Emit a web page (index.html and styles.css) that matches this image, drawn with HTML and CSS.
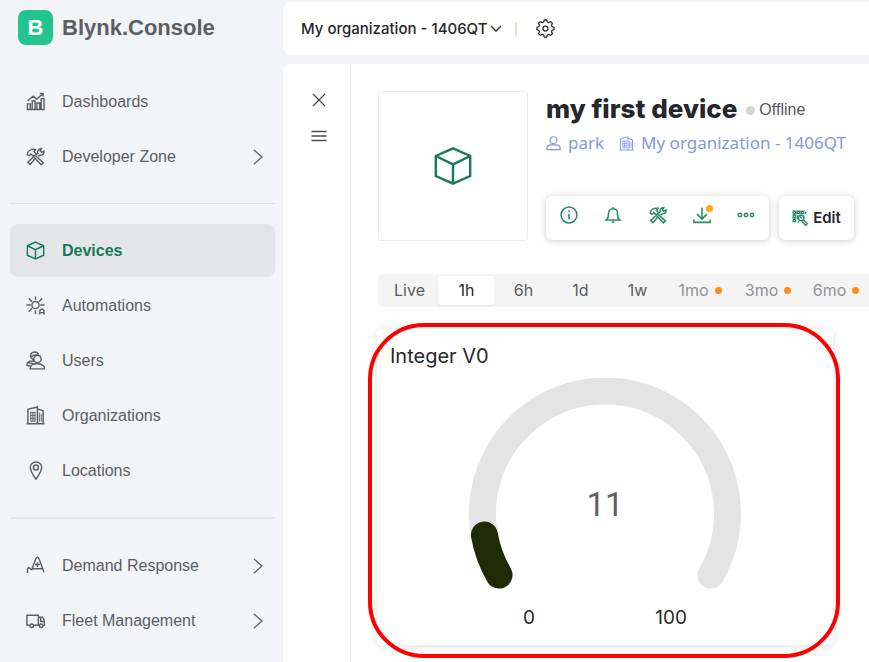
FILE: index.html
```html
<!DOCTYPE html>
<html lang="en">
<head>
<meta charset="utf-8">
<title>Blynk.Console</title>
<meta name="viewport" content="width=device-width, initial-scale=1">
<link rel="stylesheet" href="styles.css">
</head>
<body>
<svg class="defs" aria-hidden="true">
  <symbol id="cube" viewBox="0 0 20 20"><path d="M10 1.2 18.6 5v10L10 18.8 1.4 15V5zM1.4 5 10 9.200 18.600 5M10 9.200V18.800"/></symbol>
  <symbol id="tools" viewBox="0 0 20 20">
    <path d="M1.200 8C2 4 5.500 1.800 10 2.600L8.400 5l2.400 2.400-3 2.600-2.400-2.600-2 1.800z"/>
    <path d="m9.800 9 8.400 7.500-2.200 2.200-8-8.400"/>
    <path d="m10.800 7.800 1.600-1.400c-.5-2.400 1-4.800 4-4.800l-1.500 2.500 1.600 1.500 2.500-1.300c.3 3-2 4.800-4.400 4.300l-1.600 1.500M9.600 12.200l-5.200 6.300-2.600-2.300 5.600-5.400"/>
  </symbol>
  <symbol id="building" viewBox="0 0 20 20">
    <path d="M.5 18.700h19M2 18.500V3.500L12 1v17.500M12 3l6 2v13.500"/>
    <path stroke-width="1" d="M5 6v10M7.200 6v10M9.400 6v10M4.500 7h5.500M4.500 10h5.500M4.500 13h5.500M4.500 16h5.500M14 7v9.500M16 8v8.500"/>
  </symbol>
  <symbol id="chevron" viewBox="0 0 10 16"><path d="m1 1 8 7-8 7"/></symbol>
</svg>
<div class="app">
  <aside class="sidebar">
    <a class="brand" href="#"><span class="logo">B</span><span>Blynk.Console</span></a>
    <nav class="nav">
      <a href="#"><svg class="icon" viewBox="0 0 20 20"><path d="M1.500 18.500v-6h3v6zM6.500 18.500v-9h3v9zM11.500 18.500v-7h3v7zM16 18.500V7h3v11.500zM1 18.500h18M1.500 9.500 7.500 4.500l4 3L18 1.500M14.500 1.500H18V5"/></svg><span>Dashboards</span></a>
      <a href="#"><svg class="icon"><use href="#tools"/></svg><span>Developer Zone</span><svg class="chev"><use href="#chevron"/></svg></a>
      <hr>
      <a href="#" class="active" aria-current="page"><svg class="icon"><use href="#cube"/></svg><span>Devices</span></a>
      <a href="#"><svg class="icon" viewBox="0 0 20 20"><circle cx="10" cy="9.500" r="3.800"/><path d="M10 .5v3.500M10 15v4M.5 9.500H5M15 9.500h4.500M3 2.500l3.500 3.500M17 2.500 13.500 6M3 16.500l3.500-3.500M14.500 19.500v-4l1.500-1.500h1.500l1.500 1.500v4M14.500 17.500H19"/></svg><span>Automations</span></a>
      <a href="#"><svg class="icon" viewBox="0 0 20 20"><circle cx="12" cy="8.300" r="3.900"/><path d="M5 6.500C4 3 6.500 1 9 1s4 1.500 4 3M5 6.500 8 4.500l4-.3M5 6.500l3 3.500M1 15.300c-.5-3.300 2-4.800 6-4.800l2 1M1 15.300l4 .5M2.500 12.500l5 .8M4.500 18.800c-.5-3.700 2.500-5.300 7-5.300s8.500 1.600 8 5.300z"/></svg><span>Users</span></a>
      <a href="#"><svg class="icon"><use href="#building"/></svg><span>Organizations</span></a>
      <a href="#"><svg class="icon" viewBox="0 0 20 20"><path d="M10.500 19C7 14 4.500 10.500 4.500 7a6 6 0 0 1 12 0c0 3.500-2.500 7-6 12z"/><circle cx="10.500" cy="6.800" r="2.600"/></svg><span>Locations</span></a>
      <hr>
      <a href="#"><svg class="icon" viewBox="0 0 20 20"><path d="M1.500 18v-3c0-3 2-3.500 3-1.500l1.500 1 4.500-12C11 1 13 1 13.500 2.500L19 17M7 13.500h10.500M9.500 9h5M12 6.500v5"/></svg><span>Demand Response</span><svg class="chev"><use href="#chevron"/></svg></a>
      <a href="#"><svg class="icon" viewBox="0 0 20 20"><path d="M4 15H1V4.500h12V15H8M13 6.500h4.500l2 4V15h-1M13 15h1M15.500 7v4h4"/><circle cx="6" cy="15.500" r="1.900"/><circle cx="16" cy="15.500" r="1.900"/></svg><span>Fleet Management</span><svg class="chev"><use href="#chevron"/></svg></a>
    </nav>
  </aside>
  <div class="content">
    <header class="topbar">
      <button class="org" type="button">My organization - 1406QT<svg viewBox="0 0 12 8"><path d="m1 1 5 5 5-5"/></svg></button>
      <span class="sep"></span>
      <button class="gear" type="button" aria-label="Settings"><svg viewBox="0 0 20 20"><path d="M8 3.200 8.800 1h2.400l.8 2.200 1.400.6 2.200-1 1.700 1.700-1 2.200.6 1.300 2.100.8v2.400l-2.100.8-.6 1.400 1 2.100-1.700 1.700-2.200-1-1.400.6-.8 2.200H8.800L8 16.800l-1.400-.6-2.200 1-1.700-1.700 1-2.100-.6-1.400L1 11.200V8.800L3.100 8l.6-1.300-1-2.200 1.700-1.700 2.200 1z"/><circle cx="10" cy="10" r="2.600"/></svg></button>
    </header>
    <div class="panel">
      <div class="rail">
        <button type="button" aria-label="Close"><svg viewBox="0 0 16 16"><path d="m2 2 12 12M14 2 2 14"/></svg></button>
        <button type="button" aria-label="Device list"><svg viewBox="0 0 16 16"><path d="M.5 3.500h15M.5 8h15M.5 12.500h15"/></svg></button>
      </div>
      <main>
        <section class="device">
          <div class="thumb"><svg viewBox="0 0 20 20"><use href="#cube"/></svg></div>
          <div class="info">
            <div class="title"><h1>my first device</h1><span class="status">Offline</span></div>
            <div class="meta">
              <a href="#"><svg viewBox="0 0 16 16"><circle cx="8" cy="4.500" r="3.700"/><path d="M1 14.500c-.5-3.500 1.500-5 4.500-5h5c3 0 5 1.500 4.500 5z"/></svg>park</a>
              <a href="#"><svg><use href="#building"/></svg>My organization - 1406QT</a>
            </div>
            <div class="actions">
              <div class="tools">
                <button type="button" aria-label="Info"><svg viewBox="0 0 20 20"><circle cx="10" cy="10" r="8.800"/><path d="M10 8.500V15M10 5v2"/></svg></button>
                <button type="button" aria-label="Notifications"><svg viewBox="0 0 20 20"><path d="M2.500 15.500c2-1.500 2.500-3 2.500-7C5 5 7.200 3 10 3s5 2 5 5.500c0 4 .5 5.500 2.500 7zM10 1v2M8.500 17.800h3"/></svg></button>
                <button type="button" aria-label="Developer tools"><svg><use href="#tools"/></svg></button>
                <button type="button" class="badge" aria-label="Firmware update"><svg viewBox="0 0 20 20"><path d="M10 2v12M4.500 9 10 14.500 15.500 9M1 15v3.200h18V15"/></svg></button>
                <button type="button" aria-label="More"><svg viewBox="0 0 20 20"><circle cx="3.300" cy="10" r="1.900"/><circle cx="10" cy="10" r="1.900"/><circle cx="16.700" cy="10" r="1.900"/></svg></button>
              </div>
              <button type="button" class="edit"><svg viewBox="0 0 20 20"><path d="M1.500 1.500h3v3h-3zM6.500 1.500h3v3h-3zM11.500 1.500h3v3h-3zM1.500 6.500h3v3h-3zM1.500 11.500h3v3h-3zM17 2v3M7 6.500v5M7 15h2"/><circle cx="11.500" cy="10" r="3.500"/><path d="m10 8 2.500 2.500M14.500 12.500l4.800 4.500-2.300 2.300-4.500-5.500"/></svg>Edit</button>
            </div>
          </div>
        </section>
        <div class="ranges">
          <button type="button">Live</button>
          <button type="button" class="on">1h</button>
          <button type="button">6h</button>
          <button type="button">1d</button>
          <button type="button">1w</button>
          <button type="button" class="plan">1mo</button>
          <button type="button" class="plan">3mo</button>
          <button type="button" class="plan">6mo</button>
        </div>
        <section class="card">
          <h2>Integer V0</h2>
          <div class="gauge">
            <svg viewBox="0 0 272 212" role="img" aria-label="Integer V0 gauge">
              <path class="track" d="M30 197A122.500 122.500 0 1 1 242 197"/>
              <path class="value" d="M30 197A122.500 122.500 0 0 1 15.400 157"/>
            </svg>
            <span class="reading">11</span>
          </div>
          <div class="limits"><span>0</span><span>100</span></div>
        </section>
      </main>
    </div>
  </div>
</div>
</body>
</html>
```
FILE: styles.css
```css
* { box-sizing: border-box; }
body {
  margin: 0;
  background: #f2f4f8;
  color: #26272c;
  font-family: "Liberation Sans", Arial, sans-serif;
  font-size: 16px;
  overflow-x: hidden;
}
svg { fill: none; stroke: currentColor; stroke-width: 1.3; flex: none; }
a { color: inherit; text-decoration: none; }
button { font: inherit; color: inherit; background: none; border: 0; padding: 0; cursor: pointer; }
h1, h2 { margin: 0; }
.defs { position: absolute; width: 0; height: 0; }
.app { display: flex; min-height: 100vh; }

.sidebar { width: 283px; flex: none; padding: 10px 8px 0 10px; color: #5c5e63; }
.brand {
  display: flex; align-items: center; gap: 9px;
  margin: 0 0 30px 8px;
  font-size: 22px; font-weight: 700;
}
.logo {
  width: 35px; height: 35px; border-radius: 8px;
  background: #24c48e; color: #fff;
  display: grid; place-items: center;
}
.nav { display: flex; flex-direction: column; gap: 2px; }
.nav a {
  height: 53px; padding: 0 12px 0 16px; border-radius: 8px;
  display: flex; align-items: center; gap: 17px;
}
.nav hr { width: 100%; height: 1px; margin: 18px 0; border: 0; background: #dddfe4; }
.nav hr:last-of-type { height: 2px; background: #e6e8ec; }
.nav .active { background: #e3e5e9; color: #187a56; font-weight: 700; }
.icon { width: 19px; height: 19px; stroke-width: 1.5; }
.chev { width: 10px; height: 16px; margin-left: auto; }

.content { flex: 1; min-width: 0; display: flex; flex-direction: column; gap: 9px; padding-top: 2px; }
.topbar {
  height: 53px; padding-left: 18px;
  display: flex; align-items: center;
  background: #fff; border-radius: 8px 0 0 8px;
}
.org { display: flex; align-items: center; gap: 3px; font-family: Inter, sans-serif; font-size: 15px; font-weight: 500; white-space: nowrap; }
.org svg { width: 12px; height: 8px; }
.sep { width: 2px; height: 14px; margin: 0 19px 0 13px; background: #eadccf; }
.gear svg { width: 19px; height: 19px; display: block; }

.panel { flex: 1; display: flex; background: #fff; border-radius: 8px 0 0 0; }
.rail {
  width: 68px; flex: none; padding: 28px 0 0 4px;
  display: flex; flex-direction: column; align-items: center; gap: 20px;
  border-right: 1px solid #ededf0; color: #4b4c50;
}
.rail svg { width: 16px; height: 16px; display: block; }
main { flex: 1; min-width: 0; padding: 27px 0 0 27px; }

.device { display: flex; gap: 18px; }
.thumb {
  width: 150px; height: 150px; flex: none;
  display: grid; place-items: center;
  border: 1px solid #ececee; border-radius: 3px; color: #187a56;
}
.thumb svg { width: 40px; height: 40px; stroke-width: 1.2; }
.info { flex: 1; min-width: 0; white-space: nowrap; }
.title { display: flex; align-items: center; height: 36px; }
h1 { font: 800 26px/36px Inter, sans-serif; }
.status { display: flex; align-items: center; gap: 4px; margin-left: 9px; padding-top: 2px; color: #55575c; }
.status::before { content: ""; width: 9px; height: 9px; border-radius: 50%; background: #d4d4d4; }
.meta { display: flex; gap: 15px; height: 32px; color: #7f99e0; font: 17px/32px "Noto Sans", sans-serif; }
.meta a { display: flex; align-items: center; gap: 7px; }
.meta svg { width: 15px; height: 15px; }
.actions { display: flex; gap: 10px; margin-top: 37px; }
.tools, .edit { height: 44px; border-radius: 6px; box-shadow: 0 1px 7px rgba(0, 0, 0, .2); background: #fff; }
.tools { width: 223px; display: flex; justify-content: space-between; align-items: center; padding: 0 14px 6px; color: #2a8b67; }
.tools svg { width: 18px; height: 18px; display: block; stroke-width: 1.7; }
.badge { position: relative; }
.badge::after { content: ""; position: absolute; top: -1px; right: -2px; width: 7px; height: 7px; border-radius: 50%; background: #ffab0f; }
.edit { width: 75px; display: flex; align-items: center; justify-content: center; gap: 5px; font: 600 15px/20px Inter, sans-serif; }
.edit svg { width: 16px; height: 16px; color: #2a8b67; stroke-width: 1.7; }

.ranges {
  display: flex; height: 33px; margin-top: 33px; padding: 2px 3px;
  background: #f4f4f4; border-radius: 4px 0 0 4px; overflow: hidden;
  color: #5c5c5f; font: 16px/29px Inter, sans-serif;
}
.ranges button { flex: none; width: 57px; }
.ranges .on { background: #fff; color: #26272c; border-radius: 4px; box-shadow: 0 1px 2px rgba(0, 0, 0, .08); }
.ranges .plan { width: 68px; display: flex; align-items: center; justify-content: center; gap: 6px; color: #919194; }
.ranges .plan::after { content: ""; width: 7px; height: 7px; border-radius: 50%; background: #ff8c1a; }

.card {
  position: relative; max-width: 456px; height: 316px;
  margin: 22px 0 17px -1px; padding: 12px 13px;
  border-radius: 5px; background: #fff; box-shadow: 0 1px 10px rgba(0, 0, 0, .13);
}
.card::after {
  content: ""; position: absolute; inset: -6px -7px -13px -9px;
  border: 4px solid #f00; border-radius: 56px; pointer-events: none;
}
h2 { font: 400 20px/30px Inter, sans-serif; }
.gauge { width: 272px; margin: 7px auto 0; display: grid; }
.gauge svg { width: 272px; height: 212px; grid-area: 1 / 1; }
.track, .value { stroke-width: 27; stroke-linecap: round; }
.track { stroke: #e4e4e4; }
.value { stroke: #202a05; }
.reading { grid-area: 1 / 1; place-self: center; padding-top: 42px; font: 33px/40px Roboto, sans-serif; color: #5f6066; }
.limits { width: 164px; margin: 14px auto 0; display: flex; justify-content: space-between; font: 19px/28px Inter, sans-serif; }
```
